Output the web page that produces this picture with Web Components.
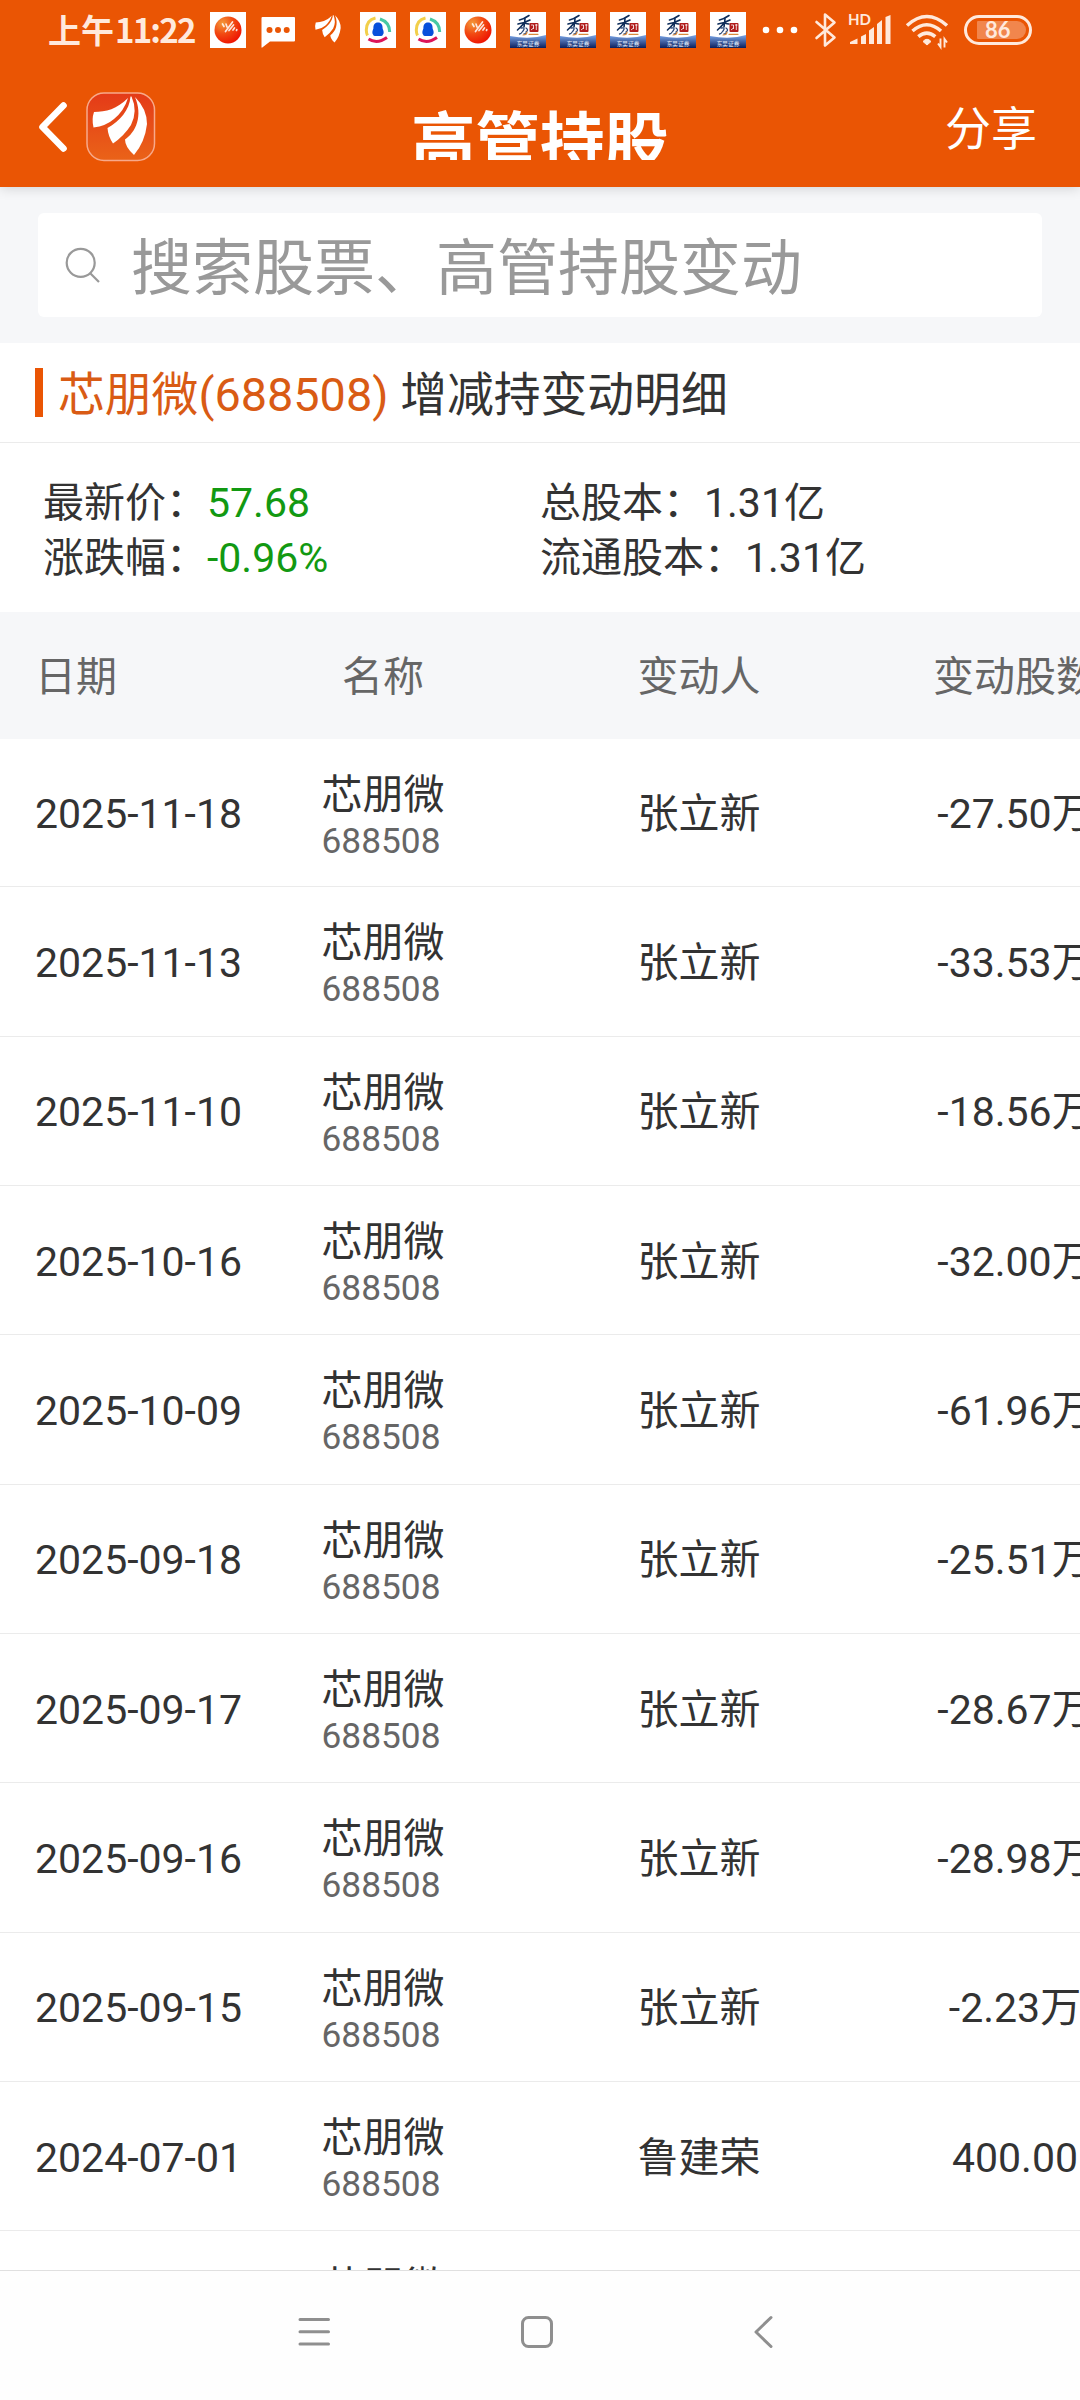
<!DOCTYPE html>
<html lang="zh-CN">
<head>
<meta charset="utf-8">
<title>高管持股</title>
<style>
    :root {
        --brand: #ea5504;
        --text: #333;
        --muted: #666;
        --down: #129912;
        --panel: #f6f7f9;
        --line: #ebebeb;
    }
    body {
        margin: 0;
        width: 1080px;
        height: 2400px;
        overflow: hidden;
        background: #fff;
        color: var(--text);
        font-family: Roboto, "Noto Sans CJK SC", sans-serif;
    }
</style>
</head>
<body>
<holdings-page>
    <status-bar slot="top" time="11:22" battery="86"></status-bar>
    <title-bar slot="top"><span slot="title">高管持股</span><span slot="action">分享</span></title-bar>
    <search-box>搜索股票、高管持股变动</search-box>
    <stock-heading code="芯朋微(688508)">增减持变动明细</stock-heading>
    <stock-stats>
        <stat-item label="最新价" down>57.68</stat-item>
        <stat-item label="总股本">1.31亿</stat-item>
        <stat-item label="涨跌幅" down>-0.96%</stat-item>
        <stat-item label="流通股本">1.31亿</stat-item>
    </stock-stats>
    <change-table></change-table>
    <system-nav slot="bottom"></system-nav>
</holdings-page>

<script>
const ROWS = [
    ['2025-11-18', '张立新', '-27.50万'],
    ['2025-11-13', '张立新', '-33.53万'],
    ['2025-11-10', '张立新', '-18.56万'],
    ['2025-10-16', '张立新', '-32.00万'],
    ['2025-10-09', '张立新', '-61.96万'],
    ['2025-09-18', '张立新', '-25.51万'],
    ['2025-09-17', '张立新', '-28.67万'],
    ['2025-09-16', '张立新', '-28.98万'],
    ['2025-09-15', '张立新', '-2.23万'],
    ['2024-07-01', '鲁建荣', '400.00'],
    ['', '', ''],
];

// ─── Inline SVG icons ───────────────────────────────────────────────────
const FEATHER = `
    <path d="M42 6 C31 17 20 20 8 20 Q5.500 27 7.500 35.500 Q20 34 28 27 Q38 19 42 6Z"/>
    <path d="M44.500 4.500 C43.500 18 34 29 21.500 36 Q22 44 27 51.500 Q38 44 45 33 Q52 19 45.500 4.500Z"/>
    <path d="M49 5 C57 24 50 40 39 47.500 Q39 55 48 63 Q59 50 61 32 Q61 17 49 5Z"/>`;

const ICONS = {
    ball: `<svg viewBox="0 0 36 36"><defs><radialGradient id="g" cx=".3" cy=".25" r=".8"><stop offset="0" stop-color="#f39a3c"/><stop offset=".5" stop-color="#f24a12"/><stop offset="1" stop-color="#ee1503"/></radialGradient></defs>
        <rect width="36" height="36" fill="#fff"/><circle cx="18" cy="18" r="13.500" fill="url(#g)"/>
        <g stroke="#fff" stroke-width="1.700" stroke-linecap="round" opacity=".85"><path d="M12.500 12l1.500 2.500M16 12l1 3M15.500 19.500L22.500 10M19 18.500L23.500 13M23 18l1.500-2M26.500 18.500l.3-1"/></g></svg>`,
    chat: `<svg viewBox="0 0 36 36"><path fill="#fff" d="M2.500 5H34q1 0 1 1V28.500q0 1-1 1H10L2.300 35.500Q1.500 36 1.500 35V6q0-1 1-1Z"/><g fill="#ea5504"><circle cx="9.500" cy="18" r="3"/><circle cx="18" cy="18" r="3"/><circle cx="26.700" cy="18" r="3"/></g></svg>`,
    feather: `<svg viewBox="0 0 36 36"><g fill="#fff" transform="translate(2 1) scale(.47)">${FEATHER}</g></svg>`,
    penguin: `<svg viewBox="0 0 36 36"><rect width="36" height="36" fill="#fff"/>
        <g fill="none" stroke-width="3"><path d="M15.500 6Q6.500 8 6.300 18Q6.300 21 7.500 23.500" stroke="#f2cf4a"/><path d="M20 7Q29.500 10 29.700 20" stroke="#47c9a4"/><path d="M8.500 27Q17 32.500 27 25.500" stroke="#dc1458"/></g>
        <path fill="#0850dc" d="M18 10.500C14.500 10.500 13.300 13 13.400 16.500Q11.500 20.500 13 22.500Q13.500 24 15 24H21Q22.500 24 23 22.500Q24.500 20.500 22.600 16.500C22.700 13 21.500 10.500 18 10.500Z"/></svg>`,
    broker: `<svg viewBox="0 0 36 36"><defs><linearGradient id="b" x2="0" y2="1"><stop offset="0" stop-color="#7ba7ea"/><stop offset="1" stop-color="#0b1f5c"/></linearGradient></defs>
        <rect width="36" height="36" fill="#fff"/><path d="M0 24Q20 28 36 23V36H0Z" fill="url(#b)"/>
        <g fill="none" stroke-linecap="round"><path d="M19 3.500Q14 7 9.500 8M8 12Q14 11 20 8M15 7L14 15M14 11Q11 15 7.500 18M15 11Q17 12 19 12" stroke="#0e2c58" stroke-width="1.600"/><path d="M11 16Q16 15 13 19Q11 22 9.500 22M16 16Q19 18 16 20Q17 22 14 22" stroke="#2a4878" stroke-width="1.300"/><path d="M17 20Q17 23 13 23M19 22.300H28" stroke="#d98a3c" stroke-width="1.200"/></g>
        <rect x="19.500" y="11" width="9" height="9" rx="1" fill="#b01c1c"/><path d="M21 13h2.500v4M21 18l2.500-2M25 13h2.500M26.300 12v6" stroke="#fff" stroke-width=".8" fill="none"/>
        <text x="18" y="33.500" font-size="5.700" text-anchor="middle" fill="#e7eefb" font-family="Noto Sans CJK SC">东吴证券</text></svg>`,
    dots: `<svg viewBox="0 0 36 36" fill="#fff"><circle cx="6" cy="18" r="3.300"/><circle cx="20" cy="18" r="3.300"/><circle cx="34" cy="18" r="3.300"/></svg>`,
};

const BLUETOOTH = '<svg width="24" height="36" viewBox="0 0 24 36" fill="none" stroke="#ffe9dc" stroke-width="2.600" stroke-linejoin="round" stroke-linecap="round"><path d="M2.500 10L20.500 25.500L11 33.500V2.500L20.500 10.500L2.500 26"/></svg>';
const SIGNAL = '<svg width="44" height="36" viewBox="0 0 44 36" fill="#ffe9dc"><path d="M2 32V30L9.500 26.500V32ZM13 32V24.500L18 22V32ZM21 32V18.500L26 15V32ZM29 32V12L34 8V32ZM37.500 32V5L42.500 3V32Z"/><text x="0" y="13" font-size="15" font-weight="700" font-family="Lato">HD</text></svg>';
const WIFI = '<svg width="44" height="36" viewBox="0 0 44 36" fill="none" stroke="#ffe9dc" stroke-width="3.500"><path d="M2 13.500Q21.800-4.500 42 13.500M7.500 19Q21.800 6.500 36 19M13.300 24.700Q21.800 17.500 30.300 24.700"/><path d="M22 33L18 29.500Q22 25 26 29.500Z" fill="#ffe9dc" stroke-width="1"/><path d="M35.500 26.500V35L33 31.500M39.500 35.500V27L42 30.500" stroke-width="1.900"/></svg>';
const BACK = '<svg width="28" height="52" viewBox="0 0 28 52" fill="none" stroke="#fff" stroke-width="6.600" stroke-linecap="round" stroke-linejoin="round"><path d="M24.500 4.500L3.500 26L24.500 47.500"/></svg>';
const LOGO = `<svg width="70" height="70" viewBox="0 0 70 70"><defs><linearGradient id="l" x2="0" y2="1"><stop offset="0" stop-color="#e43a18"/><stop offset="1" stop-color="#ea6318"/></linearGradient></defs>
    <rect x="1" y="1" width="67.500" height="67.500" rx="17" fill="url(#l)" stroke="#f8a98a" stroke-width="1.500"/><g fill="#fff">${FEATHER}</g></svg>`;
const MAGNIFIER = '<svg width="36" height="38" viewBox="0 0 36 38" fill="none" stroke="#999" stroke-width="2.200"><circle cx="15.700" cy="16.800" r="14"/><path d="M25 27L34 36"/></svg>';

/** Shared base: fills an open shadow root from the subclass' markup. */
class BaseElement extends HTMLElement {
    constructor() {
        super();
        this.attachShadow({ mode: 'open' });
    }
    connectedCallback() {
        this.shadowRoot.innerHTML = `<style>${this.constructor.css}</style>${this.html()}`;
    }
    attr(name) { return this.getAttribute(name) || ''; }
}

class HoldingsPage extends BaseElement {
    static css = `
        :host { display: flex; flex-direction: column; height: 2400px; }
        header { flex: none; background: var(--brand); box-shadow: 0 1px 12px rgba(0,0,0,.16); z-index: 1; }
        main { flex: 1; min-height: 0; overflow: hidden; }
    `;
    html() {
        return `<header><slot name="top"></slot></header><main><slot></slot></main><slot name="bottom"></slot>`;
    }
}

class StatusIcon extends BaseElement {
    static css = `:host { display: block; flex: none; width: 36px; height: 36px; } svg { display: block; width: 36px; height: 36px; overflow: visible; }`;
    html() { return ICONS[this.attr('name')]; }
}

class StatusBar extends BaseElement {
    static css = `
        :host { display: flex; align-items: center; height: 60px; padding-left: 48px; color: #ffe9dc; }
        .time { width: 162px; display: flex; align-items: center; font: 700 33px/36px "Noto Sans CJK SC", sans-serif; white-space: nowrap; margin-top: -2px; }
        .clock { letter-spacing: -1.800px; margin-left: 1px; }
        .icons { display: flex; gap: 14px; margin-right: 18px; }
        .sys { display: flex; align-items: center; }
        .sys svg { display: block; overflow: visible; }
        .bt { margin-right: 10px; }
        .sig { margin-right: 13px; }
        .wifi { margin-right: 15px; }
        .bat { box-sizing: border-box; width: 68px; height: 30px; padding: 3px; border: 3px solid #ffe9dc; border-radius: 15px; }
        .level { height: 18px; width: 49px; margin-left: 7px; border-radius: 1px 9px 9px 1px; background: #f1864d; font: 700 22px/18px Lato, sans-serif; text-indent: 8px; }
    `;
    html() {
        const names = ['ball', 'chat', 'feather', 'penguin', 'penguin', 'ball', 'broker', 'broker', 'broker', 'broker', 'broker', 'dots'];
        return `
            <div class="time"><span>上午</span><span class="clock">${this.attr('time')}</span></div>
            <div class="icons">${names.map((n) => `<status-icon name="${n}"></status-icon>`).join('')}</div>
            <div class="sys">
                <span class="bt">${BLUETOOTH}</span><span class="sig">${SIGNAL}</span><span class="wifi">${WIFI}</span>
                <div class="bat"><div class="level">${this.attr('battery')}</div></div>
            </div>`;
    }
}

class TitleBar extends BaseElement {
    static css = `
        :host { display: grid; grid-template-columns: 1fr auto 1fr; align-items: center; box-sizing: border-box; height: 127px; padding: 6px 43px 0 39px; color: #fff; }
        .left { display: flex; align-items: center; gap: 19px; }
        svg { display: block; }
        .title { height: 67px; overflow: hidden; padding-left: 4px; font-size: 64.500px; line-height: 103px; font-weight: 700; }
        .action { justify-self: end; font-size: 46px; line-height: 60px; margin-top: 4px; }
    `;
    html() {
        return `<div class="left">${BACK}${LOGO}</div>
            <div class="title"><slot name="title"></slot></div>
            <div class="action"><slot name="action"></slot></div>`;
    }
}

class SearchBox extends BaseElement {
    static css = `
        :host { display: block; box-sizing: border-box; height: 156px; padding: 26px 38px; background: var(--panel); }
        .field { display: flex; align-items: center; box-sizing: border-box; height: 104px; padding-left: 27px; border-radius: 6px; background: #fff; color: #999; font-size: 61px; line-height: 104px; white-space: nowrap; }
        svg { display: block; margin-right: 30px; }
        span { margin-top: 7px; }
    `;
    html() { return `<div class="field">${MAGNIFIER}<span><slot></slot></span></div>`; }
}

class StockHeading extends BaseElement {
    static css = `
        :host { display: flex; align-items: center; box-sizing: border-box; height: 100px; padding-left: 35px; border-bottom: 1px solid var(--line); font-size: 46.800px; line-height: 96px; white-space: pre; }
        i { width: 8px; height: 49px; margin-right: 15px; background: var(--brand); }
        b { font-weight: 400; color: #d95b14; }
        span { margin-top: 4px; }
    `;
    html() { return `<i></i><span><b>${this.attr('code')}</b> <slot></slot></span>`; }
}

class StockStats extends BaseElement {
    static css = `:host { display: grid; grid-template-columns: 497px 1fr; grid-auto-rows: 55px; align-content: start; box-sizing: border-box; height: 169px; padding: 33px 0 0 43px; }`;
    html() { return `<slot></slot>`; }
}

class StatItem extends BaseElement {
    static css = `
        :host { display: block; font-size: 41px; line-height: 55px; white-space: nowrap; }
        :host([down]) .v { color: var(--down); }
    `;
    html() { return `${this.attr('label')}：<span class="v"><slot></slot></span>`; }
}

class ChangeRow extends BaseElement {
    static css = `
        :host { display: grid; grid-template-columns: 225px 316px 316px 316px; align-items: center; justify-items: center; box-sizing: border-box; width: 1173px; height: 149.330px; padding-top: 3px; border-bottom: 1px solid var(--line); font-size: 41px; line-height: 50px; white-space: nowrap; }
        :host([head]) { height: 127px; border: 0; background: var(--panel); color: var(--muted); }
        :host([first]) { height: 148.300px; }
        .date { justify-self: start; padding-left: 35px; }
        .code { font-size: 35.300px; line-height: 42px; color: var(--muted); }
        .name { padding-top: 3px; }
    `;
    html() {
        const code = this.attr('code');
        return `
            <div class="date">${this.attr('date')}</div>
            <div class="${code ? 'name' : ''}"><div>${this.attr('name')}</div>${code ? `<div class="code">${code}</div>` : ''}</div>
            <div>${this.attr('person')}</div>
            <div>${this.attr('amount')}</div>`;
    }
}

class ChangeTable extends BaseElement {
    static css = `:host { display: block; overflow: hidden; }`;
    html() {
        const head = `<change-row head date="日期" name="名称" person="变动人" amount="变动股数"></change-row>`;
        return head + ROWS.map(([date, person, amount], i) =>
            `<change-row ${i ? '' : 'first'} date="${date}" name="芯朋微" code="688508" person="${person}" amount="${amount}"></change-row>`).join('');
    }
}

class SystemNav extends BaseElement {
    static css = `
        :host { display: flex; flex: none; justify-content: center; box-sizing: border-box; height: 130px; padding: 44px 6px 0 0; gap: 188px; border-top: 1px solid #e0e0e0; background: #fefefe; }
        svg { display: block; fill: none; stroke: #8f8f8f; stroke-width: 3; stroke-linecap: round; stroke-linejoin: round; }
    `;
    html() {
        return `
            <svg width="36" height="36" viewBox="0 0 36 36"><path d="M5 4.500H33.500M5 16.800H33.500M5 29H33.500"/></svg>
            <svg width="36" height="36" viewBox="0 0 36 36"><rect x="3.500" y="2.500" width="29" height="29" rx="6"/></svg>
            <svg width="36" height="36" viewBox="0 0 36 36"><path d="M28 2.500L13 17L28 31.500"/></svg>`;
    }
}

customElements.define('holdings-page', HoldingsPage);
customElements.define('status-icon', StatusIcon);
customElements.define('status-bar', StatusBar);
customElements.define('title-bar', TitleBar);
customElements.define('search-box', SearchBox);
customElements.define('stock-heading', StockHeading);
customElements.define('stock-stats', StockStats);
customElements.define('stat-item', StatItem);
customElements.define('change-row', ChangeRow);
customElements.define('change-table', ChangeTable);
customElements.define('system-nav', SystemNav);
</script>
</body>
</html>
